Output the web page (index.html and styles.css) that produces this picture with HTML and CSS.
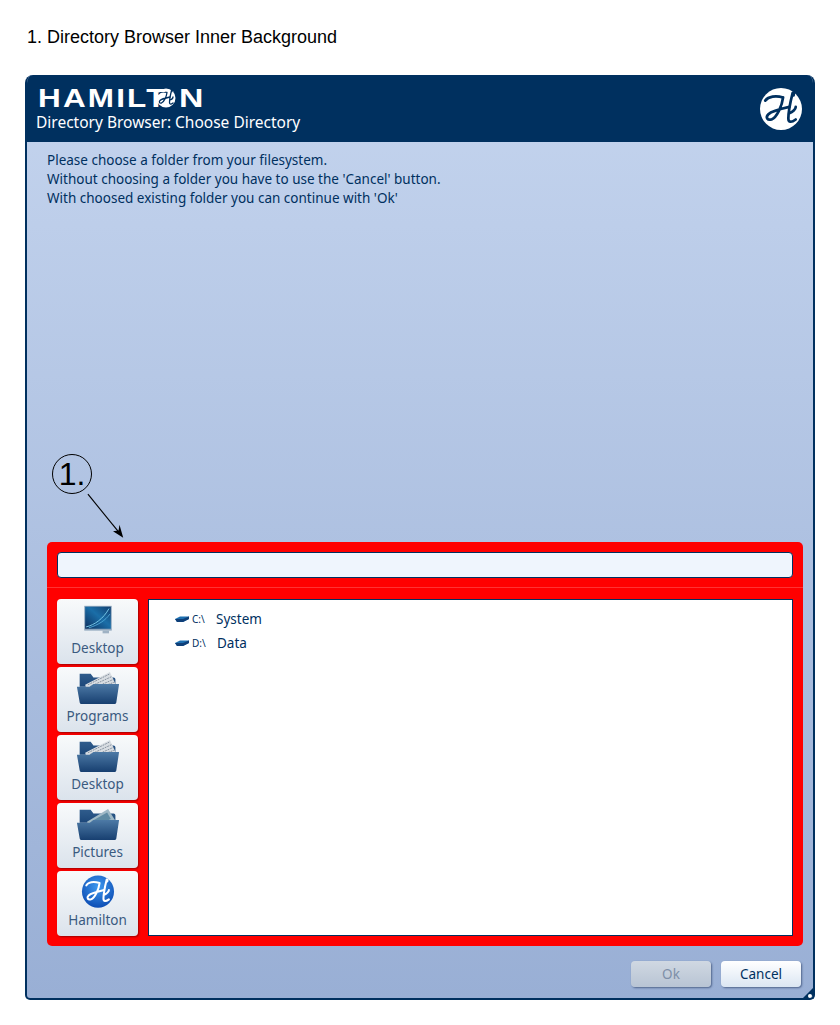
FILE: index.html
```html
<!DOCTYPE html>
<html lang="en">
<head>
<meta charset="utf-8">
<title>Directory Browser</title>
<link rel="stylesheet" href="styles.css">
</head>
<body>
<svg class="defs" width="0" height="0" aria-hidden="true">
  <defs>
    <linearGradient id="fold" x1="0" y1="0" x2="0" y2="1">
      <stop offset="0" stop-color="#4d7aa6"/>
      <stop offset="1" stop-color="#173f70"/>
    </linearGradient>
    <linearGradient id="foldback" x1="0" y1="0" x2="0" y2="1">
      <stop offset="0" stop-color="#2f5c8c"/>
      <stop offset="1" stop-color="#1c4779"/>
    </linearGradient>
    <radialGradient id="ball" cx="0.5" cy="0.35" r="0.7">
      <stop offset="0" stop-color="#3f9af0"/>
      <stop offset="1" stop-color="#0a48b0"/>
    </radialGradient>
    <linearGradient id="screen" x1="0" y1="1" x2="1" y2="0">
      <stop offset="0" stop-color="#0d2f5e"/>
      <stop offset="0.55" stop-color="#1a6ea8"/>
      <stop offset="1" stop-color="#123f70"/>
    </linearGradient>
    <symbol id="script-h" viewBox="0 0 40 40">
      <path d="M5 12c3-4 10-5 17-3 M22 9c-1 8-6 19-11 21-4 1-6-2-3-5 3-3 11-5 20-7" fill="none" stroke-width="2.6" stroke-linecap="round"/>
      <path d="M31 5c-2 8-4 18-4 24 0 4 3 4 7 1 M31 5c0-1 2-1 1 2 M28 24c3-1 6-4 6-6" fill="none" stroke-width="2.6" stroke-linecap="round"/>
    </symbol>
    <symbol id="folder" viewBox="0 0 48 38">
      <path d="M4 3h12l3 4h22c1 0 2 1 2 2v8H4z" fill="url(#foldback)"/>
    </symbol>
    <symbol id="folder-front" viewBox="0 0 48 38">
      <path d="M1 17h14l4-3h28l-3 20c0 1-1 2-2 2H6c-1 0-2-1-2-2z" fill="url(#fold)"/>
    </symbol>
    <symbol id="drive" viewBox="0 0 14 8">
      <path d="M0 4 5 1.500h9V4L8 7H2z" fill="#1d6fb0"/>
      <path d="M0 4h8l6-2.500V4L8 7H2z" fill="#0f3f78"/>
    </symbol>
  </defs>
</svg>

<h1 class="page-title">1. Directory Browser Inner Background</h1>

<main class="window">
  <header class="win-header">
    <div class="brand">
      <div class="logo"><span class="logo-text">HAMILT</span><svg class="logo-o" viewBox="0 0 40 40"><circle cx="20" cy="20" r="19" fill="#fff"/><use href="#script-h" class="stroke-navy"/></svg><span class="logo-text">N</span></div>
      <div class="win-title">Directory Browser: Choose Directory</div>
    </div>
    <svg class="seal" viewBox="0 0 40 40"><circle cx="20" cy="20" r="20" fill="#fff"/><use href="#script-h" class="stroke-navy"/></svg>
  </header>

  <div class="win-body">
    <div class="message">
      <p>Please choose a folder from your filesystem.</p>
      <p>Without choosing a folder you have to use the 'Cancel' button.</p>
      <p>With choosed existing folder you can continue with 'Ok'</p>
    </div>

    <section class="browser">
      <div class="address-row"><div class="address"></div></div>
      <div class="browser-main">
        <nav class="places">
          <button class="place">
            <svg class="place-icon" viewBox="0 0 48 38"><rect x="9" y="3" width="30" height="27" fill="#8fa6bd"/><rect x="10" y="4" width="28" height="24" fill="url(#screen)"/><path d="M11 26C20 24 30 17 36 6" stroke="#7fd0ee" stroke-width="1" fill="none"/><path d="M14 27C24 24 32 19 37 12" stroke="#4fa8d8" stroke-width="1" fill="none"/><path d="M29 30h7v3h-7z" fill="#9fb2c4"/></svg>
            <span>Desktop</span>
          </button>
          <button class="place">
            <svg class="place-icon" viewBox="0 0 48 38"><use href="#folder"/><path d="M10 15 37 1l6 13-16 8H12z" fill="#d8dde2"/><path d="M13 15 37 3M15 17 39 6M18 19 41 9M21 20 42 12" stroke="#7f8b99" stroke-width="1" stroke-dasharray="2 1" fill="none"/><use href="#folder-front"/></svg>
            <span>Programs</span>
          </button>
          <button class="place">
            <svg class="place-icon" viewBox="0 0 48 38"><use href="#folder"/><path d="M10 15 37 1l6 13-16 8H12z" fill="#d8dde2"/><path d="M13 15 37 3M15 17 39 6M18 19 41 9M21 20 42 12" stroke="#7f8b99" stroke-width="1" stroke-dasharray="2 1" fill="none"/><use href="#folder-front"/></svg>
            <span>Desktop</span>
          </button>
          <button class="place">
            <svg class="place-icon" viewBox="0 0 48 38"><use href="#folder"/><path d="M12 16 35 2l8 13-15 7H14z" fill="#9fb9c6"/><path d="M18 15 34 6l4 7-13 6z" fill="#5f8ba3"/><use href="#folder-front"/></svg>
            <span>Pictures</span>
          </button>
          <button class="place">
            <svg class="place-icon" viewBox="0 0 48 38"><circle cx="24" cy="18" r="17.500" fill="url(#ball)"/><svg x="7" y="1" width="34" height="34" viewBox="0 0 40 40"><use href="#script-h" class="stroke-white"/></svg></svg>
            <span>Hamilton</span>
          </button>
        </nav>
        <div class="tree">
          <div class="tree-row"><svg class="drive" viewBox="0 0 14 8"><use href="#drive"/></svg><span class="drive-letter">C:\</span><span class="drive-name">System</span></div>
          <div class="tree-row"><svg class="drive" viewBox="0 0 14 8"><use href="#drive"/></svg><span class="drive-letter">D:\</span><span class="drive-name data">Data</span></div>
        </div>
      </div>
    </section>

    <footer class="actions">
      <button class="action" disabled>Ok</button>
      <button class="action">Cancel</button>
    </footer>
  </div>
  <div class="grip"><i></i></div>
</main>

<div class="callout">1.</div>
<svg class="callout-arrow" viewBox="0 0 42 50"><path d="M1 1 36 44" stroke="#000" stroke-width="1.200" fill="none"/><path d="M39 48 28 41l6-1 1-6z" fill="#000"/></svg>
</body>
</html>
```
FILE: styles.css
```css
* { box-sizing: border-box; }
html, body { margin: 0; padding: 0; }
body {
  width: 840px;
  height: 1025px;
  background: #fff;
  font-family: "Liberation Sans", Arial, sans-serif;
  position: relative;
  overflow: hidden;
}
.defs { position: absolute; }
.page-title {
  margin: 0;
  padding: 27px 0 0 27px;
  height: 75px;
  font-size: 18px;
  line-height: 21px;
  font-weight: 400;
  color: #000;
}
.window {
  margin-left: 25px;
  width: 790px;
  height: 925px;
  display: flex;
  flex-direction: column;
  border: 2px solid #00305f;
  border-top: 0;
  border-radius: 8px 8px 5px 5px;
  position: relative;
  overflow: hidden;
  font-family: "Noto Sans", "Open Sans", sans-serif;
  background: linear-gradient(#c4d4ee, #99afd5);
}
.win-header {
  flex: none;
  height: 67px;
  margin: 0 -2px;
  padding: 0 13px 0 11px;
  background: #00305f;
  display: flex;
  justify-content: space-between;
  align-items: center;
}
.brand { display: flex; flex-direction: column; align-self: stretch; }
.logo {
  display: flex;
  align-items: center;
  height: 18px;
  margin: 14px 0 0 2px;
  transform-origin: left center;
  color: #fff;
}
.logo-text {
  font-family: "Liberation Sans", Arial, sans-serif;
  font-weight: 700;
  font-size: 26px;
  line-height: 18px;
  display: inline-block;
  letter-spacing: 1.800px;
  transform-origin: left center;
}
.logo-text:first-child { width: 118px; transform: scaleX(1.21); }
.logo-text:last-child { width: 25px; transform: scaleX(1.3); }
.logo-o { width: 20px; height: 20px; flex: none; margin: 0 3px 0 0; }
.stroke-navy { stroke: #00305f; color: #00305f; }
.stroke-white { stroke: #fff; color: #fff; }
.win-title {
  margin-top: 4px;
  font-size: 15.500px;
  line-height: 22px;
  color: #fff;
  white-space: nowrap;
}
.seal { width: 42px; height: 42px; flex: none; }
.win-body {
  flex: 1;
  min-height: 0;
  display: flex;
  flex-direction: column;
  padding: 9px 10px 11px 20px;
}
.message {
  flex: 1;
  font-size: 13.500px;
  line-height: 19px;
  color: #00305f;
}
.message p { margin: 0; white-space: nowrap; }
.browser {
  flex: none;
  height: 404px;
  background: #f00;
  border-radius: 5px;
  display: flex;
  flex-direction: column;
  margin-right: 0;
}
.address-row {
  flex: none;
  height: 46px;
  padding: 10px 10px 0;
  border-bottom: 1px solid #f33;
}
.address {
  height: 26px;
  background: #eff5fd;
  border: 1px solid #00305f;
  border-radius: 4px;
}
.browser-main {
  flex: 1;
  min-height: 0;
  display: flex;
  gap: 10px;
  padding: 11px 10px 10px;
}
.places {
  flex: none;
  width: 81px;
  display: flex;
  flex-direction: column;
  gap: 3px;
}
.place {
  flex: none;
  height: 65px;
  padding: 4px 0 0;
  border: 0;
  border-radius: 4px;
  background: linear-gradient(#f8fafb, #dbe3ec);
  box-shadow: 1px 1px 2px rgba(120, 0, 0, .7);
  display: flex;
  flex-direction: column;
  align-items: center;
  font-family: "Noto Sans", sans-serif;
  font-size: 13.500px;
  line-height: 18px;
  color: #3a5a80;
}
.place-icon { width: 44px; height: 35px; flex: none; margin-bottom: 1px; }
.tree {
  flex: 1;
  background: #fff;
  border: 1px solid #00305f;
  padding: 7px 0 0 26px;
  color: #00305f;
}
.tree-row {
  height: 24px;
  display: flex;
  align-items: center;
  font-size: 13.500px;
}
.drive { width: 14px; height: 8px; flex: none; }
.drive-letter { width: 27px; padding-left: 3px; font-size: 10px; flex: none; }
.drive-name.data { margin-left: 1px; }
.actions {
  flex: none;
  display: flex;
  justify-content: flex-end;
  gap: 10px;
  padding-top: 15px;
  margin-right: 2px;
}
.action {
  width: 80px;
  height: 26px;
  padding: 0;
  border: 0;
  border-radius: 4px;
  font-family: "Noto Sans", sans-serif;
  font-size: 13.500px;
  color: #00305f;
  background: linear-gradient(#fff, #dbe6f2);
  box-shadow: 1px 1px 2px rgba(30, 50, 90, .6);
}
.action:disabled {
  color: #7d8fa8;
  background: linear-gradient(#d0d8e2, #b8c4d4);
}
.grip {
  position: absolute;
  right: -2px;
  bottom: -2px;
  width: 0;
  height: 0;
  border-style: solid;
  border-width: 0 0 14px 14px;
  border-color: transparent transparent #00305f transparent;
}
.grip i {
  position: absolute;
  right: 3px;
  top: 8px;
  width: 4px;
  height: 4px;
  background: #fff;
  border-radius: 50%;
}
.callout {
  position: absolute;
  left: 52px;
  top: 454px;
  width: 40px;
  height: 40px;
  border: 1.500px solid #000;
  border-radius: 50%;
  font-family: "Liberation Sans", Arial, sans-serif;
  font-size: 32px;
  line-height: 38px;
  text-align: center;
  color: #000;
}
.callout-arrow {
  position: absolute;
  left: 87px;
  top: 493px;
  width: 39px;
  height: 47px;
}
```
